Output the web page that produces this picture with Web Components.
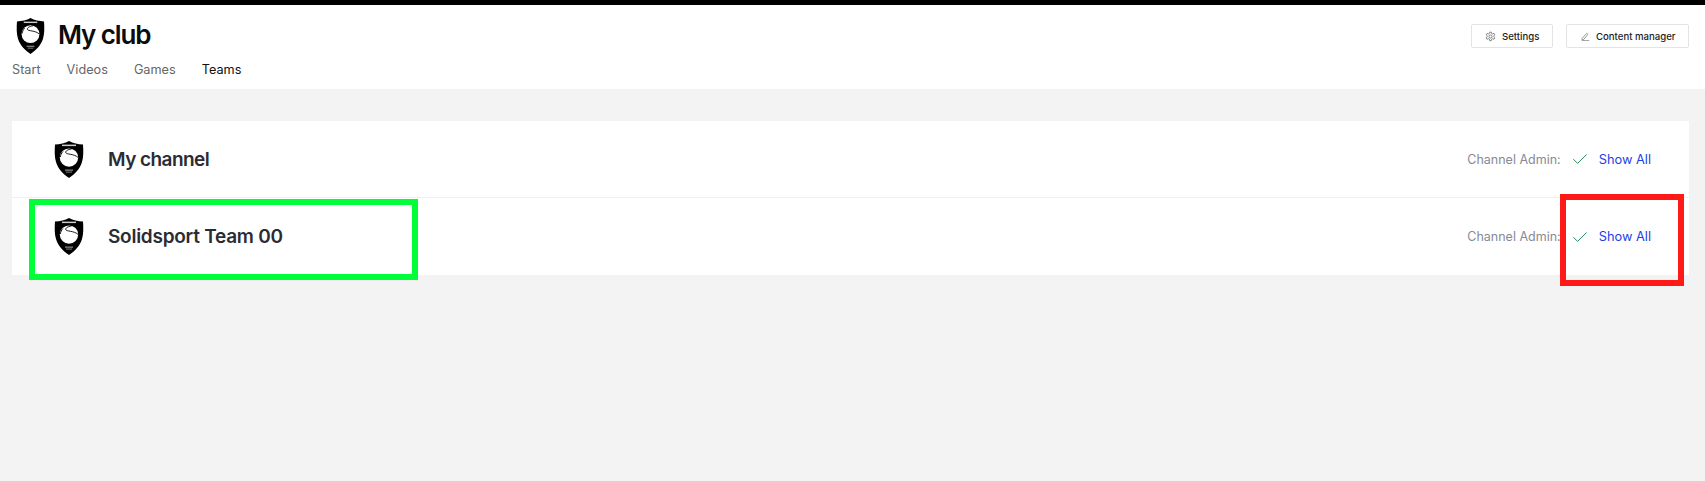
<!DOCTYPE html>
<html><head><meta charset="utf-8">
<style>
html,body{margin:0;padding:0;background:#f3f3f3;height:100%}
body{font-family:Inter,"Liberation Sans",sans-serif;overflow:hidden}
</style></head>
<body>
<app-shell>
<club-header slot="header"></club-header>
<team-card>
<team-row name="My channel" style="--ls:-.55px"></team-row>
<team-row name="Solidsport Team 00" style="--ls:-.25px"></team-row>
</team-card>
</app-shell>
<script>
const SHIELD=`<svg viewBox="0 0 30 37" width="100%" height="100%" style="display:block">
<path d="M15 0C11 2.2 6 3.3 1 3.6C.6 10 .4 16 2 21C4 28 9.5 33.5 15 37C20.5 33.5 26 28 28 21C29.6 16 29.4 10 29 3.6C24 3.3 19 2.2 15 0Z" fill="#000"/>
<rect x="8" y="3.6" width="14" height="1.5" fill="#ccc"/>
<circle cx="15" cy="16.6" r="9.2" fill="#fff"/>
<path d="M17.5 8C14 8.6 11.4 9.8 11.8 11.6C12.3 13.6 20 12.6 24 16.4" fill="none" stroke="#000" stroke-width=".9"/>
<path d="M9 10.5C7.5 12 6.5 14 6.4 16" fill="none" stroke="#000" stroke-width=".9"/>
<rect x="11" y="28.6" width="8" height="1" fill="#aaa"/><rect x="12" y="30.6" width="6" height=".9" fill="#888"/>
</svg>`;
function def(name,html,init){
  customElements.define(name,class extends HTMLElement{
    constructor(){super();this.attachShadow({mode:'open'}).innerHTML=html;}
    connectedCallback(){if(init)init(this);}
  });
}
def('app-shell',`<style>
:host{display:block;height:481px;position:relative;background:#f3f3f3;box-sizing:border-box;border-top:5px solid #000}
main{padding:32px 16px 0 12px}
</style><slot name="header"></slot><main><slot></slot></main>`);

def('club-logo',`<style>:host{display:block;width:30px;height:37px;flex:none}</style>`+SHIELD);

def('nav-link',`<style>:host{display:block;font-size:12.7px;line-height:18px;color:#666}
:host([active]){color:#111}</style><slot></slot>`);

def('tool-button',`<style>:host{display:flex;align-items:center;box-sizing:border-box;height:24px;background:#fff;border:1px solid #e4e4e4;border-radius:2px;font-size:9.6px;font-weight:500;color:#222;white-space:nowrap}
</style><slot></slot>`);

def('club-header',`<style>
:host{display:block;background:#fff;height:84px;box-sizing:border-box;position:relative}
.bar{display:flex;justify-content:space-between;padding:13px 16px 0 16px}
.brand{display:flex;align-items:flex-start;gap:13px}
.brand club-logo{width:29px;height:36px}
h1{margin:-1px 0 0;font-size:26px;line-height:36px;font-weight:600;color:#0c0c0c;letter-spacing:-1.1px}
.tools{display:flex;gap:13px;padding-top:6px}
tool-button svg{display:block;flex:none}
.s{padding-left:13px;gap:6px;width:82px}
.c{padding-left:14px;gap:6px;width:123px}
nav{display:flex;gap:26px;padding:7px 0 0 12px}
</style>
<div class="bar"><div class="brand"><club-logo></club-logo><h1>My club</h1></div>
<div class="tools">
<tool-button class="s"><svg width="11" height="11" viewBox="0 0 24 24" fill="none" stroke="#555" stroke-width="1.5"><circle cx="12" cy="12" r="3.4"/><path d="M10.2 2.5h3.6l.6 3 2.4 1.1 2.7-1.5 2 3.2-2.3 2 .1 2.6 2.2 2-2 3.2-2.8-1.4-2.3 1.2-.6 3.1h-3.6l-.6-3.1-2.3-1.2-2.8 1.4-2-3.2 2.2-2 .1-2.6-2.3-2 2-3.2 2.7 1.5 2.4-1.1z"/></svg>Settings</tool-button>
<tool-button class="c"><svg width="9" height="9" viewBox="0 0 24 24" fill="none" stroke="#555" stroke-width="1.6"><path d="M3 17L15 3.5l3.5 3L7 20l-4.5 1z"/><path d="M2 23h20"/></svg>Content manager</tool-button>
</div></div>
<nav><nav-link>Start</nav-link><nav-link>Videos</nav-link><nav-link>Games</nav-link><nav-link active>Teams</nav-link></nav>`);

def('team-card',`<style>:host{display:block;background:#fff}
::slotted(team-row:not(:last-child)){border-bottom:1px solid #f0f0f0}</style><slot></slot>`);

def('team-row',`<style>
:host{display:flex;align-items:center;height:77px;box-sizing:border-box;padding:0 38px 0 42px}
club-logo{margin-right:24px}
.name{font-size:19px;font-weight:600;color:#2b2c33;letter-spacing:var(--ls,0);flex:1}
.lab{font-size:12.5px;color:#868a94;margin-right:12px}
.all{font-size:12.8px;color:#1d3fe6;margin-left:12px}
svg{display:block;flex:none}
</style><club-logo></club-logo><span class="name"></span><span class="lab">Channel Admin:</span>
<svg width="14" height="10" viewBox="0 0 14 10" fill="none" stroke="#2a8a5c" stroke-width="1"><path d="M.4 5.2L4.6 9.4 13.6.5"/></svg>
<span class="all">Show All</span>`,el=>{el.shadowRoot.querySelector('.name').textContent=el.getAttribute('name');});

def('mark-box',`<style>:host{display:block;position:absolute;box-sizing:border-box;border:6px solid var(--c);pointer-events:none}</style>`);
</script>
<mark-box style="--c:#00ff38;left:29px;top:199px;width:389px;height:81px"></mark-box>
<mark-box style="--c:#ff1a1a;left:1560px;top:194px;width:124px;height:92px"></mark-box>
</body></html>
